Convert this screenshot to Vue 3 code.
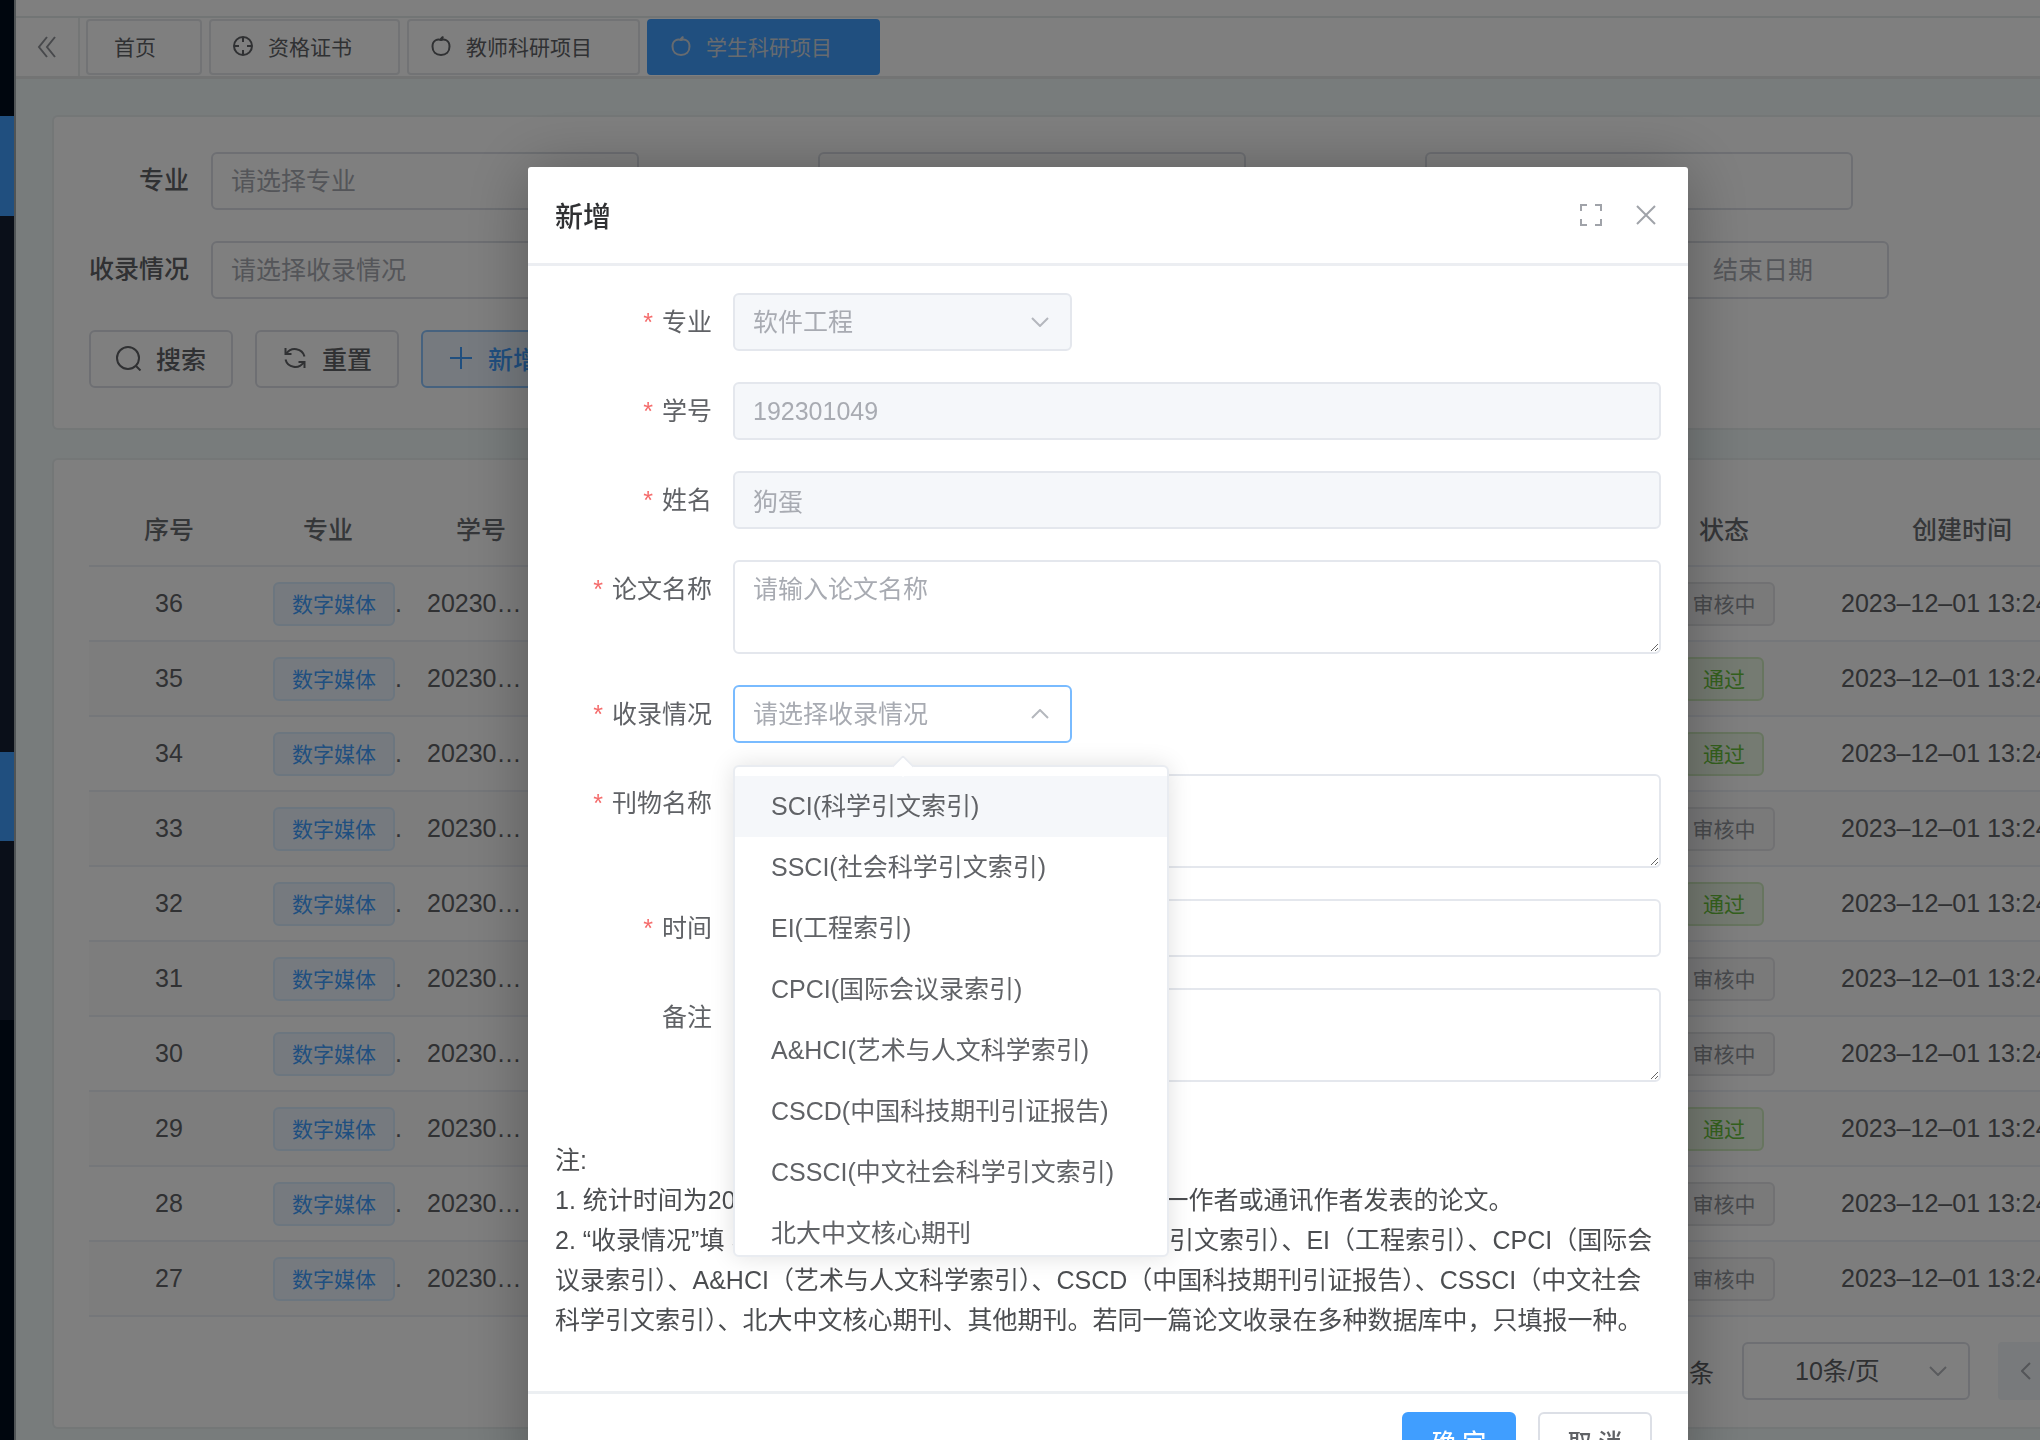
<script setup>
import { ref } from 'vue'

const rows = [
  { id: 36, passed: false },
  { id: 35, passed: true },
  { id: 34, passed: true },
  { id: 33, passed: false },
  { id: 32, passed: true },
  { id: 31, passed: false },
  { id: 30, passed: false },
  { id: 29, passed: true },
  { id: 28, passed: false },
  { id: 27, passed: false },
]

const tabs = [
  { label: '首页', icon: '' },
  { label: '资格证书', icon: 'aim' },
  { label: '教师科研项目', icon: 'apple' },
  { label: '学生科研项目', icon: 'apple', active: true },
]

const options = [
  'SCI(科学引文索引)',
  'SSCI(社会科学引文索引)',
  'EI(工程索引)',
  'CPCI(国际会议录索引)',
  'A&HCI(艺术与人文科学索引)',
  'CSCD(中国科技期刊引证报告)',
  'CSSCI(中文社会科学引文索引)',
  '北大中文核心期刊',
]

const highlighted = ref(0)
</script>

<template>
  <div class="app">
    <aside class="sidebar">
      <div class="side-top"></div>
      <div class="side-active"></div>
      <div class="side-group"></div>
      <div class="side-current"></div>
      <div class="side-sub"></div>
    </aside>

    <div class="page">
      <header class="topbar"></header>
      <nav class="tabbar">
        <button class="collapse" aria-label="向左滚动">
          <svg width="20" height="22" viewBox="0 0 20 22"><path d="M10 1 2 11l8 10M18 1l-8 10 8 10" /></svg>
        </button>
        <button
          v-for="tab in tabs"
          :key="tab.label"
          class="tab"
          :class="{ active: tab.active, plain: !tab.icon }"
        >
          <svg v-if="tab.icon === 'aim'" width="20" height="20" viewBox="0 0 20 20">
            <circle cx="10" cy="10" r="9" /><path d="M10 1v5M10 14v5M1 10h5M14 10h5" />
          </svg>
          <svg v-if="tab.icon === 'apple'" width="20" height="20" viewBox="0 0 20 20">
            <path d="M10 4C7 2.500 1.500 4 1.500 10.500 1.500 16 5 19 10 19s8.500-3 8.500-8.500C18.500 4 13 2.500 10 4ZM10 4c0-1.500.8-2.500 2.500-3" />
          </svg>
          <span>{{ tab.label }}</span>
        </button>
      </nav>

      <main class="content">
        <section class="card search">
          <div class="search-row">
            <label class="search-label" for="s-major">专业</label>
            <input id="s-major" class="box search-box" placeholder="请选择专业" />
            <label class="search-label" for="s-no">学号</label>
            <input id="s-no" class="box search-box" />
            <label class="search-label" for="s-name">姓名</label>
            <input id="s-name" class="box search-box" />
          </div>
          <div class="search-row">
            <label class="search-label" for="s-index">收录情况</label>
            <input id="s-index" class="box search-box" placeholder="请选择收录情况" />
            <label class="search-label" for="s-journal">刊物名称</label>
            <input id="s-journal" class="box search-box" />
            <label class="search-label" for="s-start">时间</label>
            <div class="box range">
              <input id="s-start" placeholder="开始日期" />
              <input placeholder="结束日期" aria-label="结束日期" />
            </div>
          </div>
          <div class="actions">
            <button class="btn">
              <svg width="26" height="26" viewBox="0 0 26 26"><circle cx="12" cy="13" r="11" /><path d="m19.500 20.500 5 5" /></svg>
              搜索
            </button>
            <button class="btn">
              <svg width="26" height="26" viewBox="0 0 26 26">
                <path d="M3.500 3v6h6M4.500 8.500A10 10 0 0 1 22.500 11.500M22.500 23v-6h-6M21.500 17.500A10 10 0 0 1 3.500 14.500" />
              </svg>
              重置
            </button>
            <button class="btn add">
              <svg width="26" height="26" viewBox="0 0 26 26"><path d="M13 2v22M2 13h22" /></svg>
              新增
            </button>
          </div>
        </section>

        <section class="card list">
          <div class="wide">
            <table>
              <colgroup>
                <col class="c-id" /><col class="c-major" /><col class="c-no" /><col />
                <col class="c-state" /><col class="c-time" />
              </colgroup>
              <thead>
                <tr><th>序号</th><th>专业</th><th>学号</th><th>论文名称</th><th>状态</th><th>创建时间</th></tr>
              </thead>
              <tbody>
                <tr v-for="(row, i) in rows" :key="row.id" :class="{ stripe: i % 2 }">
                  <td>{{ row.id }}</td>
                  <td><div class="major"><span class="tag blue">数字媒体</span><span>.</span></div></td>
                  <td class="no">20230…</td>
                  <td></td>
                  <td><span class="tag" :class="row.passed ? 'green' : 'gray'">{{ row.passed ? '通过' : '审核中' }}</span></td>
                  <td class="time">2023–12–01 13:24:10</td>
                </tr>
              </tbody>
            </table>
            <div class="pager">
              <span>共 36 条</span>
              <div class="select">
                <select class="box page-size" aria-label="每页条数"><option>10条/页</option></select>
                <svg width="18" height="10" viewBox="0 0 18 10"><path d="m1 1 8 8 8-8" /></svg>
              </div>
              <button class="prev" aria-label="上一页">
                <svg width="10" height="18" viewBox="0 0 10 18"><path d="M9 1 1 9l8 8" /></svg>
              </button>
            </div>
          </div>
        </section>
      </main>
    </div>

    <div class="overlay">
      <div class="dialog" role="dialog" aria-labelledby="dlg-title">
        <header class="dlg-head">
          <h2 id="dlg-title">新增</h2>
          <button aria-label="全屏">
            <svg width="22" height="22" viewBox="0 0 22 22"><path d="M1 7V1h6M15 1h6v6M21 15v6h-6M7 21H1v-6" /></svg>
          </button>
          <button aria-label="关闭">
            <svg width="20" height="20" viewBox="0 0 20 20"><path d="m1 1 18 18M19 1 1 19" /></svg>
          </button>
        </header>

        <form class="dlg-body" @submit.prevent>
          <div class="field">
            <label class="required" for="f-major">专业</label>
            <div class="select narrow">
              <select id="f-major" class="box" disabled><option>软件工程</option></select>
              <svg width="18" height="10" viewBox="0 0 18 10"><path d="m1 1 8 8 8-8" /></svg>
            </div>
          </div>
          <div class="field">
            <label class="required" for="f-no">学号</label>
            <input id="f-no" class="box" value="192301049" disabled />
          </div>
          <div class="field">
            <label class="required" for="f-name">姓名</label>
            <input id="f-name" class="box" value="狗蛋" disabled />
          </div>
          <div class="field">
            <label class="required" for="f-title">论文名称</label>
            <textarea id="f-title" class="box" placeholder="请输入论文名称"></textarea>
          </div>
          <div class="field">
            <label class="required" for="f-index">收录情况</label>
            <div class="select narrow">
              <select id="f-index" class="box focus"><option>请选择收录情况</option></select>
              <svg width="18" height="10" viewBox="0 0 18 10"><path d="m1 9 8-8 8 8" /></svg>
              <div class="popper">
                <ul role="listbox">
                  <li
                    v-for="(option, i) in options"
                    :key="option"
                    role="option"
                    :class="{ hover: i === highlighted }"
                    @mouseenter="highlighted = i"
                  >{{ option }}</li>
                </ul>
              </div>
            </div>
          </div>
          <div class="field">
            <label class="required" for="f-journal">刊物名称</label>
            <textarea id="f-journal" class="box"></textarea>
          </div>
          <div class="field">
            <label class="required" for="f-time">时间</label>
            <input id="f-time" class="box" />
          </div>
          <div class="field">
            <label for="f-remark">备注</label>
            <textarea id="f-remark" class="box"></textarea>
          </div>
          <div class="notes">
            <p>注:</p>
            <p>1. 统计时间为2023年9月1日至2024年8月31日期间以第一作者或通讯作者发表的论文。</p>
            <p>2. “收录情况”填 SCI（科学引文索引）、SSCI（社会科学引文索引）、EI（工程索引）、CPCI（国际会议录索引）、A&amp;HCI（艺术与人文科学索引）、CSCD（中国科技期刊引证报告）、CSSCI（中文社会科学引文索引）、北大中文核心期刊、其他期刊。若同一篇论文收录在多种数据库中，只填报一种。</p>
          </div>
        </form>

        <footer class="dlg-foot">
          <button class="btn primary">确 定</button>
          <button class="btn">取 消</button>
        </footer>
      </div>
    </div>
  </div>
</template>

<style>
body {
  margin: 0;
}
</style>

<style scoped>
.app {
  display: flex;
  height: 100vh;
  overflow: hidden;
  font-family: "Liberation Sans", "Noto Sans CJK SC", sans-serif;
  font-size: 25px;
  color: #606266;
}
.app *,
.app *::before {
  box-sizing: border-box;
}
svg {
  flex: none;
  fill: none;
  stroke: currentColor;
  stroke-width: 2;
}
button,
input,
select,
textarea {
  margin: 0;
  font: inherit;
  color: inherit;
}
button {
  display: flex;
  align-items: center;
  justify-content: center;
  padding: 0;
  border: 0;
  background: none;
}

/* sidebar */
.sidebar {
  display: flex;
  flex-direction: column;
  flex: none;
  width: 16px;
  border-right: 2px solid #a0a8ac;
  background: #000c1d;
}
.side-top { height: 116px; }
.side-active { height: 100px; background: #409eff; }
.side-group { height: 536px; background: #141f33; }
.side-current { height: 89px; background: #409eff; }
.side-sub { height: 179px; background: #141f33; }

/* page */
.page {
  flex: 1;
  min-width: 0;
  background: #f0f8f9;
}
.topbar {
  height: 18px;
  border-bottom: 2px solid #e4eaea;
  background: #fff;
}
.tabbar {
  display: flex;
  gap: 7px;
  height: 61px;
  border-bottom: 3px solid #e6e8e8;
  background: #fff;
}
.collapse {
  width: 64px;
  border-right: 2px solid #e8ecec;
  color: #909399;
}
.tab {
  gap: 15px;
  height: 56px;
  margin-top: 1px;
  padding: 0 46px 2px 22px;
  border: 2px solid #e4e7ea;
  border-radius: 4px;
  font-size: 21px;
}
.tab.plain {
  padding: 0 44px 2px 26px;
}
.tab:nth-child(2) {
  margin-left: -1px;
}
.tab.active {
  border-color: #409eff;
  background: #409eff;
  color: #cfd6de;
}
.content {
  display: flex;
  flex-direction: column;
  gap: 28px;
  padding: 36px 0 14px 36px;
}
.card {
  padding-left: 35px;
  border: 2px solid #e8eeef;
  border-right: 0;
  border-radius: 6px 0 0 6px;
  background: #fff;
  overflow: hidden;
}
.search {
  display: flex;
  flex-direction: column;
  gap: 31px;
  height: 315px;
  padding-top: 35px;
}
.search-row {
  display: flex;
}
.search-label {
  flex: none;
  width: 100px;
  margin-right: 22px;
  line-height: 56px;
  font-weight: 500;
  text-align: right;
}
.box {
  display: block;
  width: 100%;
  height: 58px;
  padding: 0 18px;
  border: 2px solid #e4e7ed;
  border-radius: 6px;
  outline: 0;
  background: #fff;
}
.box::placeholder,
.range input::placeholder {
  color: #a8abb2;
  opacity: 1;
}
.search .box,
.page-size {
  border-color: #dcdfe6;
}
.search-box {
  flex: none;
  width: 428px;
  margin-right: 57px;
}
.range {
  display: flex;
  flex: none;
  width: 464px;
}
.range input {
  width: 50%;
  padding: 0;
  border: 0;
  background: none;
  text-align: center;
}
.actions {
  display: flex;
  gap: 22px;
}
.btn {
  gap: 14px;
  width: 144px;
  height: 58px;
  padding-bottom: 2px;
  border: 2px solid #dcdfe6;
  border-radius: 6px;
  background: #fff;
  font-weight: 500;
}
.btn.add {
  border-color: #8cc5ff;
  background: #ecf5ff;
  color: #409eff;
}

/* table */
.list {
  padding-top: 31px;
  padding-bottom: 27px;
}
.wide {
  width: calc(100% + 74px);
}
table {
  width: 100%;
  table-layout: fixed;
  border-collapse: collapse;
  text-align: center;
}
.c-id { width: 160px; }
.c-major { width: 158px; }
.c-no { width: 148px; }
.c-state { width: 172px; }
.c-time { width: 304px; }
th,
td {
  height: 75px;
  padding: 0 20px;
  border-bottom: 2px solid #ebeef5;
}
th {
  font-weight: 500;
  color: #6b6e73;
}
.stripe { background: #fafafa; }
.major {
  display: flex;
  align-items: center;
  margin-left: 4px;
}
td.no,
td.time {
  padding-right: 0;
  text-align: left;
  white-space: nowrap;
}
td.time { padding-left: 31px; }
.tag {
  display: inline-flex;
  flex: none;
  align-items: center;
  height: 44px;
  padding: 0 17px 2px;
  border: 2px solid;
  border-radius: 6px;
  font-size: 21px;
  white-space: nowrap;
}
.blue { border-color: #d9ecff; background: #ecf5ff; color: #409eff; }
.green { border-color: #cfeabf; background: #eaf6e4; color: #67c23a; }
.gray { border-color: #e2e3e6; background: #f4f4f5; color: #909399; }
.pager {
  display: flex;
  align-items: center;
  justify-content: flex-end;
  gap: 28px;
  padding: 25px 60px 0 0;
}
.select {
  position: relative;
}
.select select {
  appearance: none;
}
.select > svg {
  position: absolute;
  top: 24px;
  right: 23px;
  color: #b4b7bd;
  pointer-events: none;
}
.page-size {
  width: 228px;
  padding: 0 51px;
}
.prev {
  width: 56px;
  height: 58px;
  border-radius: 4px;
  background: #f0f5f8;
  color: #a8abb2;
}

/* dialog */
.overlay {
  position: fixed;
  inset: 0;
  display: flex;
  align-items: flex-start;
  justify-content: center;
  padding: 167px 0 0 176px;
  background: rgba(0, 0, 0, 0.5);
  overflow: hidden;
}
.dialog {
  width: 1160px;
  max-width: 100%;
  border-radius: 3px;
  background: #fff;
  box-shadow: 0 4px 64px rgba(0, 0, 0, 0.3);
}
.dlg-head {
  display: flex;
  align-items: center;
  gap: 34px;
  height: 99px;
  padding: 0 32px 0 27px;
  border-bottom: 3px solid #eceef2;
  color: #a0a3a9;
}
.dlg-head h2 {
  flex: 1;
  margin: 0;
  font-size: 28px;
  font-weight: 500;
  color: #303133;
}
.dlg-body {
  display: flex;
  flex-direction: column;
  gap: 31px;
  padding: 27px 27px 51px;
}
.field {
  display: flex;
  align-items: flex-start;
}
.field label {
  flex: none;
  width: 157px;
  margin-right: 21px;
  line-height: 58px;
  text-align: right;
}
.required::before {
  content: "*";
  margin-right: 9px;
  color: #f56c6c;
}
.box:disabled {
  background: #f5f7fa;
  color: #a8abb2;
  opacity: 1;
}
textarea.box {
  height: 94px;
  padding-top: 9px;
  line-height: 36px;
}
.narrow {
  width: 339px;
}
.box.focus {
  border-color: #79bbff;
  color: #a8abb2;
}
.popper {
  position: absolute;
  z-index: 2;
  top: 80px;
  left: 0;
  width: 436px;
  border: 2px solid #e9ecf1;
  border-radius: 6px;
  background: #fff;
  box-shadow: 0 0 24px rgba(0, 0, 0, 0.12);
}
.popper::before {
  content: "";
  position: absolute;
  top: -9px;
  left: 160px;
  width: 16px;
  height: 16px;
  border: 2px solid #e9ecf1;
  border-right: 0;
  border-bottom: 0;
  border-radius: 3px 0 0;
  background: #fff;
  transform: rotate(45deg);
}
.popper ul {
  max-height: 488px;
  margin: 0;
  padding: 9px 0 0;
  overflow: hidden;
  list-style: none;
}
.popper li {
  padding-left: 36px;
  line-height: 61px;
}
.popper .hover {
  background: #f5f7fa;
}
.notes {
  margin-top: 27px;
  line-height: 40px;
  color: #4b4d50;
}
.notes p {
  margin: 0;
}
.dlg-foot {
  display: flex;
  justify-content: flex-end;
  gap: 22px;
  padding: 18px 36px;
  border-top: 3px solid #eceff2;
}
.dlg-foot .btn {
  width: 114px;
  font-size: 24px;
}
.btn.primary {
  border-color: #409eff;
  background: #409eff;
  color: #fff;
}
</style>
